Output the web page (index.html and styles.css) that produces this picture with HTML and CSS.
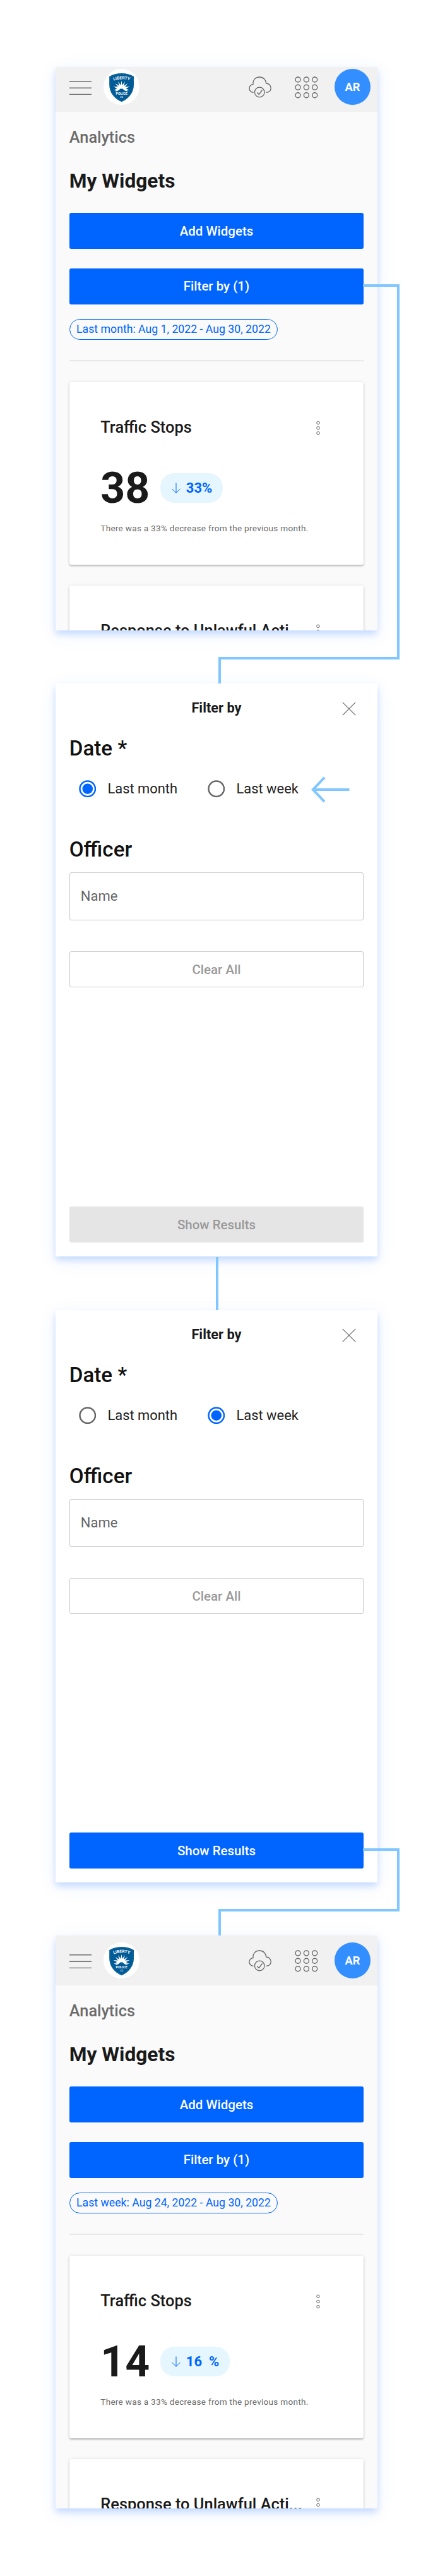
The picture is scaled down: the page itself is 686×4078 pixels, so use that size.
FILE: index.html
```html
<!DOCTYPE html>
<html lang="en">
<head>
<meta charset="utf-8">
<title>My Widgets – filter flow</title>
<link rel="stylesheet" href="styles.css">
</head>
<body>
<svg class="defs" width="0" height="0" aria-hidden="true">
  <symbol id="menu" viewBox="0 0 35 24"><path d="M0 1.8H35M0 12.2H35M0 22.4H35" fill="none" stroke="#6b6b6b" stroke-width="1.4"/></symbol>
  <symbol id="shield" viewBox="0 0 57 57">
    <circle cx="28.5" cy="28.5" r="28.5" fill="#fff"/>
    <path d="M9.2 12Q18 7 28.7 7T48 12V25C48 38 40 47 28.7 52.3C17 47 9.2 38 9.2 25Z" fill="#005a96"/>
    <path d="M10.2 12.7Q18.5 8 28.7 8T47 12.7V25C47 37.3 39.5 46 28.7 51.1C18 46 10.2 37.3 10.2 25Z" fill="none" stroke="#2f7bad" stroke-width=".5"/>
    <path d="M28.5 18.5L29.6 26L34 20L32 27L38.5 23L34 28.5L41.5 28L35.5 31L41 34L36 33.5L39 35.5Q34 36 30.5 31.5H26.5Q23 36 18 35.5L21 33.5L16 34L21.5 31L15.5 28L23 28.5L18.5 23L25 27L23 20L27.4 26Z" fill="#fff"/>
  </symbol>
  <symbol id="cloud" viewBox="0 0 36 34">
    <g fill="none" stroke="#666" stroke-width="1.3">
    <path d="M7.5 25.3A6.3 6.3 0 0 1 1 19C1 15.5 3.6 12.7 7 12.6C6.2 6 10.5 1 17 1C23.5 1 27.5 5.5 27.7 11C32 11 35.2 14.5 35.2 18.5C35.2 22.8 32.2 25.3 27.5 25.3"/>
    <circle cx="17.2" cy="25" r="7.8"/><path d="M13.2 25.5L16.2 28.5L21.5 21.5"/></g>
  </symbol>
  <symbol id="apps" viewBox="0 0 37 35"><g fill="none" stroke="#666" stroke-width="1.4">
    <circle cx="5" cy="5" r="4"/><circle cx="18.4" cy="5" r="4"/><circle cx="31.7" cy="5" r="4"/>
    <circle cx="5" cy="17.3" r="4"/><circle cx="18.4" cy="17.3" r="4"/><circle cx="31.7" cy="17.3" r="4"/>
    <circle cx="5" cy="29.7" r="4"/><circle cx="18.4" cy="29.7" r="4"/><circle cx="31.7" cy="29.7" r="4"/></g></symbol>
  <symbol id="dots" viewBox="0 0 6 23"><g fill="none" stroke="#666" stroke-width="1"><circle cx="3" cy="3.3" r="2.3"/><circle cx="3" cy="11.5" r="2.3"/><circle cx="3" cy="19.7" r="2.3"/></g></symbol>
  <symbol id="down" viewBox="0 0 14 17"><path d="M7 .5V16.3M.5 10L7 16.3L13.5 10" fill="none" stroke="#0065ff" stroke-width="1"/></symbol>
  <symbol id="close" viewBox="0 0 22 22"><path d="M.8 .8L21.2 21.2M21.2 .8L.8 21.2" fill="none" stroke="#666" stroke-width="1.2"/></symbol>
  <symbol id="pointer" viewBox="0 0 62 44"><path d="M60.5 22H3M21 2.9L2.8 22L21 41.1" fill="none" stroke="#80c6ff" stroke-width="4"/></symbol>
  <symbol id="radio-off" viewBox="0 0 27.5 27.5"><circle cx="13.75" cy="13.75" r="12.25" fill="#fff" stroke="#666" stroke-width="2.5"/></symbol>
  <symbol id="radio-on" viewBox="0 0 27.5 27.5"><circle cx="13.75" cy="13.75" r="12.25" fill="#fff" stroke="#0065ff" stroke-width="2.5"/><circle cx="13.75" cy="13.75" r="8.3" fill="#0065ff"/></symbol>
</svg>

<main class="flow">
  <section class="screen screen-first">
    <div class="dashboard dashboard-scrolled">
      <header class="topbar">
        <svg class="i-menu"><use href="#menu"/></svg>
        <svg class="i-badge" viewBox="0 0 57 57">
          <use href="#shield" width="57" height="57"/>
          <path id="arc-a" d="M14.5 19.2Q28.5 13.5 43 19.2" fill="none"/>
          <text class="badge-text" font-size="6.6"><textPath href="#arc-a" startOffset="50%" text-anchor="middle">LIBERTY</textPath></text>
          <text class="badge-text" x="28.7" y="41.2" font-size="5.4" text-anchor="middle">POLICE</text>
          <text class="badge-text badge-sub" x="28.7" y="46.2" font-size="3.8" text-anchor="middle">CO</text>
        </svg>
        <svg class="i-cloud"><use href="#cloud"/></svg>
        <svg class="i-apps"><use href="#apps"/></svg>
        <span class="avatar">AR</span>
      </header>
      <div class="content">
        <p class="crumb">Analytics</p>
        <h1 class="heading">My Widgets</h1>
        <div class="actions"><button class="btn">Add Widgets</button><button class="btn">Filter by (1)</button></div>
        <span class="chip">Last month: Aug 1, 2022 - Aug 30, 2022</span>
        <hr class="rule">
        <article class="card">
          <div class="card-head"><h2 class="card-title">Traffic Stops</h2><svg class="i-dots"><use href="#dots"/></svg></div>
          <div class="stat"><span class="num">38</span><span class="trend"><svg class="i-down"><use href="#down"/></svg>33%</span></div>
          <p class="note">There was a 33% decrease from the previous month.</p>
        </article>
        <article class="card">
          <div class="card-head"><h2 class="card-title">Response to Unlawful Acti...</h2><svg class="i-dots"><use href="#dots"/></svg></div>
        </article>
      </div>
    </div>
  </section>

  <section class="screen filter">
    <header class="filter-head"><h2 class="filter-title">Filter by</h2><svg class="i-close"><use href="#close"/></svg></header>
    <h3 class="label">Date *</h3>
    <div class="radios">
      <label class="option option-month"><svg class="radio"><use href="#radio-on"/></svg><span class="option-text">Last month</span></label>
      <label class="option"><svg class="radio"><use href="#radio-off"/></svg><span class="option-text">Last week</span></label>
      <svg class="i-pointer"><use href="#pointer"/></svg>
    </div>
    <h3 class="label label-officer">Officer</h3>
    <div class="field">Name</div>
    <button class="btn btn-outline">Clear All</button>
    <button class="btn btn-submit btn-disabled">Show Results</button>
  </section>

  <section class="screen filter filter-second">
    <header class="filter-head"><h2 class="filter-title">Filter by</h2><svg class="i-close"><use href="#close"/></svg></header>
    <h3 class="label">Date *</h3>
    <div class="radios">
      <label class="option option-month"><svg class="radio"><use href="#radio-off"/></svg><span class="option-text">Last month</span></label>
      <label class="option"><svg class="radio"><use href="#radio-on"/></svg><span class="option-text">Last week</span></label>
    </div>
    <h3 class="label label-officer">Officer</h3>
    <div class="field">Name</div>
    <button class="btn btn-outline">Clear All</button>
    <button class="btn btn-submit">Show Results</button>
  </section>

  <section class="screen">
    <div class="dashboard">
      <header class="topbar">
        <svg class="i-menu"><use href="#menu"/></svg>
        <svg class="i-badge" viewBox="0 0 57 57">
          <use href="#shield" width="57" height="57"/>
          <path id="arc-b" d="M14.5 19.2Q28.5 13.5 43 19.2" fill="none"/>
          <text class="badge-text" font-size="6.6"><textPath href="#arc-b" startOffset="50%" text-anchor="middle">LIBERTY</textPath></text>
          <text class="badge-text" x="28.7" y="41.2" font-size="5.4" text-anchor="middle">POLICE</text>
          <text class="badge-text badge-sub" x="28.7" y="46.2" font-size="3.8" text-anchor="middle">CO</text>
        </svg>
        <svg class="i-cloud"><use href="#cloud"/></svg>
        <svg class="i-apps"><use href="#apps"/></svg>
        <span class="avatar">AR</span>
      </header>
      <div class="content">
        <p class="crumb">Analytics</p>
        <h1 class="heading">My Widgets</h1>
        <div class="actions"><button class="btn">Add Widgets</button><button class="btn">Filter by (1)</button></div>
        <span class="chip">Last week: Aug 24, 2022 - Aug 30, 2022</span>
        <hr class="rule">
        <article class="card">
          <div class="card-head"><h2 class="card-title">Traffic Stops</h2><svg class="i-dots"><use href="#dots"/></svg></div>
          <div class="stat"><span class="num">14</span><span class="trend"><svg class="i-down"><use href="#down"/></svg>16&nbsp; %</span></div>
          <p class="note">There was a 33% decrease from the previous month.</p>
        </article>
        <article class="card">
          <div class="card-head"><h2 class="card-title">Response to Unlawful Acti...</h2><svg class="i-dots"><use href="#dots"/></svg></div>
        </article>
      </div>
    </div>
  </section>

  <svg class="connectors" viewBox="0 0 686 4078"><path d="M575 452H631V1042H348V1082M344 1990V2074M575 2928H631V3024H348V3064" fill="none" stroke="#80c6ff" stroke-width="4"/></svg>
</main>
</body>
</html>
```
FILE: styles.css
```css
* { box-sizing: border-box; margin: 0; padding: 0; }
body { background: #fff; font-family: Roboto, sans-serif; color: #1a1a1a; }
.defs { position: absolute; }
.flow { position: relative; width: 686px; height: 4078px; padding: 106px 0 0 88px; display: flex; flex-direction: column; gap: 84px; overflow: hidden; }
.connectors { position: absolute; inset: 0; width: 686px; height: 4078px; }
.screen { width: 510px; height: 907px; flex: none; background: #fff; box-shadow: 0 6px 10px rgba(0, 101, 255, .2), 0 6px 32px rgba(0, 101, 255, .07); }
.screen-first { height: 892px; }
.dashboard { display: flow-root; height: 100%; overflow: hidden; background: #fafafa; }
.dashboard-scrolled .topbar { margin-top: -8px; }

.topbar { height: 79px; padding: 11px 11px 0 22px; display: flex; align-items: flex-start; background: #f1f1f1; }
.topbar svg { flex: none; }
.i-menu { width: 35px; height: 24px; margin: 17.5px 19px 0 0; }
.i-badge { width: 57px; height: 57px; }
.i-cloud { width: 36px; height: 34px; margin: 11.5px 0 0 auto; }
.i-apps { width: 37px; height: 35px; margin: 11.5px 26.5px 0 37px; }
.avatar { flex: none; width: 57px; height: 57px; border-radius: 50%; background: #338fff; color: #fff; font-size: 18.2px; font-weight: 700; line-height: 58px; text-align: center; }
.badge-text { font-family: Roboto, sans-serif; font-weight: 700; fill: #fff; }
.badge-sub { fill: #b8d4e6; }

.content { padding: 26.6px 21.75px 0; display: flex; flex-direction: column; }
.crumb { font-size: 25.3px; line-height: 28px; font-weight: 500; color: #6b6b6b; }
.heading { margin-top: 36.5px; font-size: 31.7px; line-height: 38px; font-weight: 700; }
.actions { margin-top: 31.4px; display: flex; flex-direction: column; gap: 30.5px; }
.btn { height: 57px; width: 100%; flex: none; border: 0; border-radius: 3px; background: #0065ff; color: #fff; font: 500 20.5px/56px Roboto, sans-serif; text-align: center; }
.chip { align-self: flex-start; width: 330.5px; height: 33px; margin-top: 23px; border: 1px solid #0065ff; border-radius: 17px; color: #0065ff; font-size: 17.7px; line-height: 30.5px; text-align: center; white-space: nowrap; }
.rule { height: 2px; margin-top: 32px; border: 0; background: #e8e8e8; }
.card { height: 289.3px; flex: none; margin-top: 32.7px; padding: 56.6px 60px 0 49.5px; border-radius: 3px; background: #fff; box-shadow: 0 2px 3px rgba(0, 0, 0, .24), 0 0 5px rgba(0, 0, 0, .1); }
.card-head { height: 30px; display: flex; justify-content: space-between; align-items: flex-start; }
.card-title { font-size: 25.45px; line-height: 30px; font-weight: 500; white-space: nowrap; }
.i-dots { width: 6px; height: 23px; margin: 4.5px 9px 0 0; flex: none; }
.stat { display: flex; align-items: center; gap: 16.5px; margin-top: 48px; }
.num { font-size: 68px; line-height: 68px; font-weight: 700; }
.trend { display: flex; align-items: center; height: 46.5px; margin-bottom: 1.6px; padding: 0 17px 0 18px; border-radius: 22px; background: #e5f6ff; color: #0065ff; font-size: 22px; font-weight: 700; }
.i-down { width: 14px; height: 17px; margin-right: 9px; }
.note { margin-top: 19px; font-size: 13.6px; line-height: 20px; letter-spacing: .27px; color: #6b6b6b; white-space: nowrap; }

.filter { padding: 26px 21.75px 22px; display: flex; flex-direction: column; }
.filter-second { height: 906px; margin-top: 1px; }
.filter-head { display: grid; grid-template-columns: 1fr auto 1fr; height: 26px; }
.filter-title { grid-column: 2; font-size: 21.8px; line-height: 26px; font-weight: 700; }
.i-close { justify-self: end; width: 22px; height: 22px; margin: 3px 12.5px 0 0; }
.label { margin-top: 32px; font-size: 33.2px; line-height: 38px; font-weight: 500; color: #111; }
.radios { height: 44px; margin-top: 23px; padding-left: 14.75px; display: flex; align-items: center; }
.option { display: flex; align-items: center; gap: 18.5px; flex: none; }
.option-month { width: 204px; }
.radio { width: 27.5px; height: 27.5px; flex: none; }
.option-text { font-size: 21.9px; line-height: 28px; color: #222; }
.i-pointer { width: 62px; height: 44px; margin: 2px 0 0 20.5px; flex: none; }
.label-officer { margin-top: 55px; }
.field { height: 76px; margin-top: 17px; padding-left: 17px; border: 1px solid #c8c8c8; border-radius: 3px; color: #666; font-size: 22px; line-height: 73px; }
.btn-outline { margin-top: 49px; border: 1px solid #c8c8c8; background: #fff; color: #999; line-height: 54px; }
.btn-submit { margin-top: auto; }
.btn-disabled { background: #e5e5e5; color: #999; }
```
